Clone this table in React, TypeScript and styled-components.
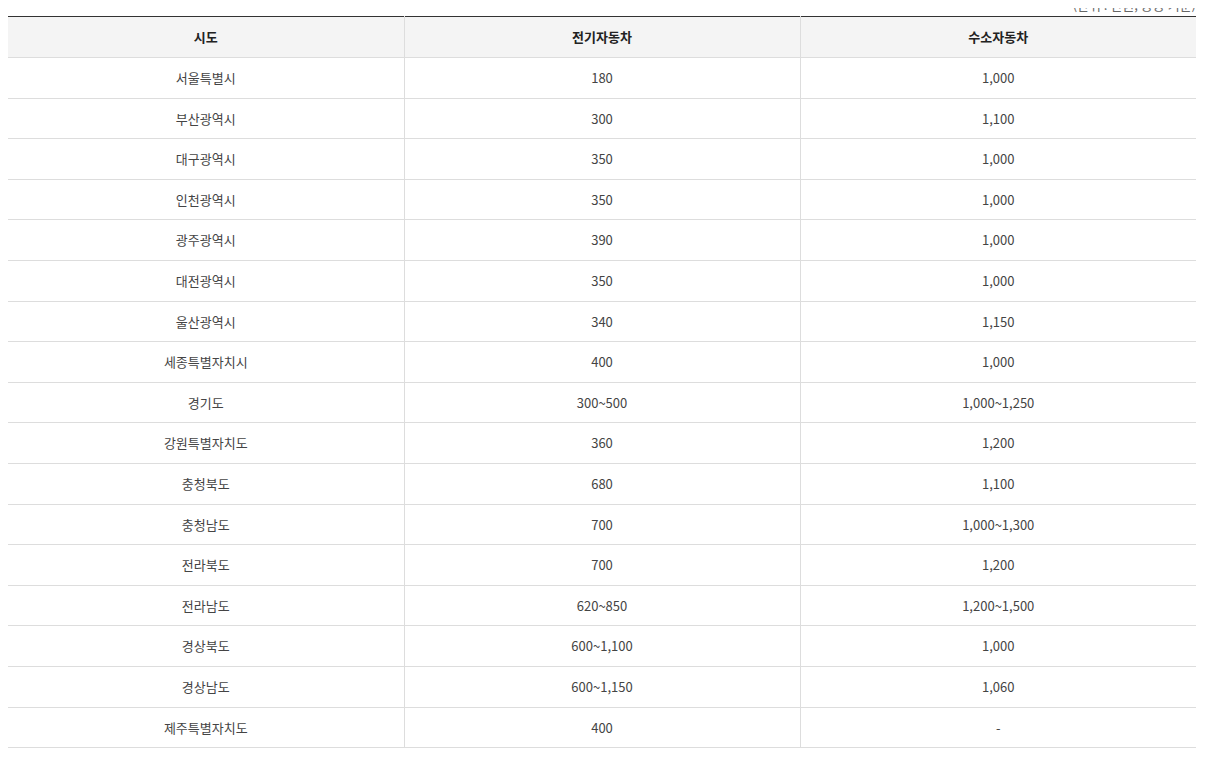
import styled, { createGlobalStyle } from 'styled-components';

const GlobalStyle = createGlobalStyle`
  body {
    margin: 8px;
    background: #fff;
    font-family: "Noto Sans CJK KR", "Noto Sans", sans-serif;
  }
`;

const Wrapper = styled.div`
  width: 1188px;
`;

const Unit = styled.p`
  margin: -13px 0 1px;
  text-align: right;
  font-size: 13px;
  line-height: 20px;
  color: #666;
`;

const Table = styled.table`
  width: 100%;
  border-collapse: collapse;
  table-layout: fixed;
  border-top: 1px solid #333;
`;

const Th = styled.th`
  background-color: #f4f4f4;
  color: #222;
  font-size: 13px;
  font-weight: bold;
  line-height: 20px;
  padding: 10px 0;
  border-bottom: 1px solid #ddd;
  border-left: 1px solid #ddd;

  &:first-child {
    border-left: none;
  }
`;

const Td = styled.td`
  color: #444;
  font-size: 13px;
  text-align: center;
  line-height: 19.6px;
  padding: 10px 0;
  border-bottom: 1px solid #ddd;
  border-left: 1px solid #ddd;

  &:first-child {
    border-left: none;
  }
`;

interface Row {
  city: string;
  ev: string;
  fcev: string;
}

const rows: Row[] = [
  { city: '서울특별시', ev: '180', fcev: '1,000' },
  { city: '부산광역시', ev: '300', fcev: '1,100' },
  { city: '대구광역시', ev: '350', fcev: '1,000' },
  { city: '인천광역시', ev: '350', fcev: '1,000' },
  { city: '광주광역시', ev: '390', fcev: '1,000' },
  { city: '대전광역시', ev: '350', fcev: '1,000' },
  { city: '울산광역시', ev: '340', fcev: '1,150' },
  { city: '세종특별자치시', ev: '400', fcev: '1,000' },
  { city: '경기도', ev: '300~500', fcev: '1,000~1,250' },
  { city: '강원특별자치도', ev: '360', fcev: '1,200' },
  { city: '충청북도', ev: '680', fcev: '1,100' },
  { city: '충청남도', ev: '700', fcev: '1,000~1,300' },
  { city: '전라북도', ev: '700', fcev: '1,200' },
  { city: '전라남도', ev: '620~850', fcev: '1,200~1,500' },
  { city: '경상북도', ev: '600~1,100', fcev: '1,000' },
  { city: '경상남도', ev: '600~1,150', fcev: '1,060' },
  { city: '제주특별자치도', ev: '400', fcev: '-' },
];

const App = () => {
  return (
    <Wrapper>
      <GlobalStyle />
      <Unit>(단위 : 만원, 승용 기준)</Unit>
      <Table>
        <thead>
          <tr>
            <Th>시도</Th>
            <Th>전기자동차</Th>
            <Th>수소자동차</Th>
          </tr>
        </thead>
        <tbody>
          {rows.map(el => (
            <tr key={el.city}>
              <Td>{el.city}</Td>
              <Td>{el.ev}</Td>
              <Td>{el.fcev}</Td>
            </tr>
          ))}
        </tbody>
      </Table>
    </Wrapper>
  );
};

export default App;
